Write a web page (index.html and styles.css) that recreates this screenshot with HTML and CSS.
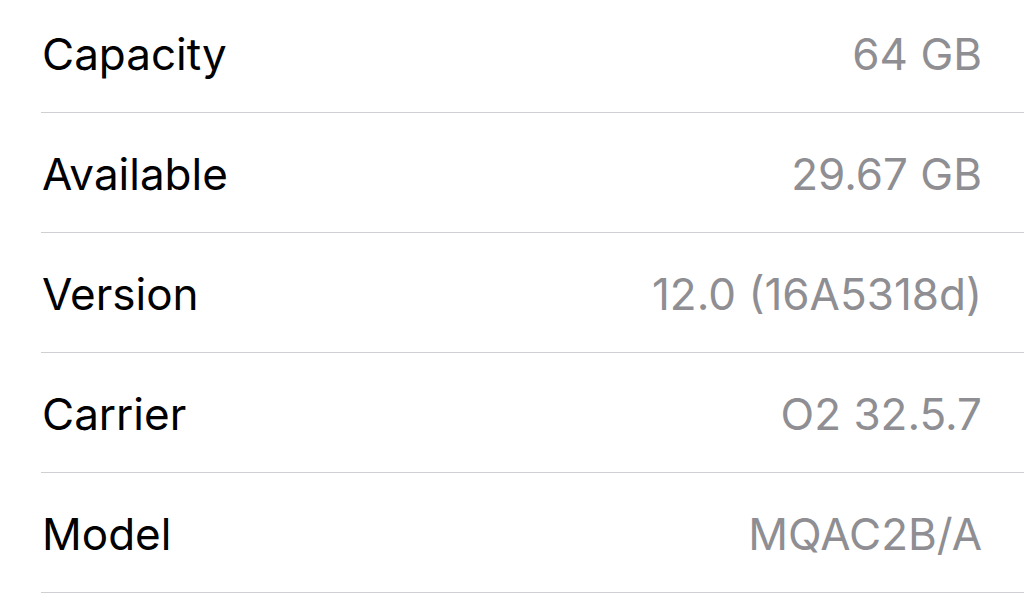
FILE: index.html
```html
<!DOCTYPE html>
<html>
<head>
<meta charset="utf-8">
<link rel="stylesheet" href="styles.css">
</head>
<body>
<ul class="list">
  <li class="row"><span class="label">Capacity</span><span class="value">64 GB</span></li>
  <li class="row"><span class="label">Available</span><span class="value">29.67 GB</span></li>
  <li class="row"><span class="label">Version</span><span class="value">12.0 (16A5318d)</span></li>
  <li class="row"><span class="label">Carrier</span><span class="value">O2 32.5.7</span></li>
  <li class="row"><span class="label">Model</span><span class="value">MQAC2B/A</span></li>
</ul>
</body>
</html>
```
FILE: styles.css
```css
html, body {
  margin: 0;
  padding: 0;
  background: #ffffff;
  overflow: hidden;
}
.list {
  list-style: none;
  margin: -7px 0 0 41px;
  padding: 0;
  font-family: Inter, "Liberation Sans", sans-serif;
  font-size: 44px;
}
.row {
  height: 117px;
  border-bottom: 1px solid #cfcfd3;
  display: flex;
  align-items: center;
  justify-content: space-between;
  padding: 2px 42px 0 1px;
}
.label {
  color: #000000;
}
.value {
  color: #8e8e93;
}
```
